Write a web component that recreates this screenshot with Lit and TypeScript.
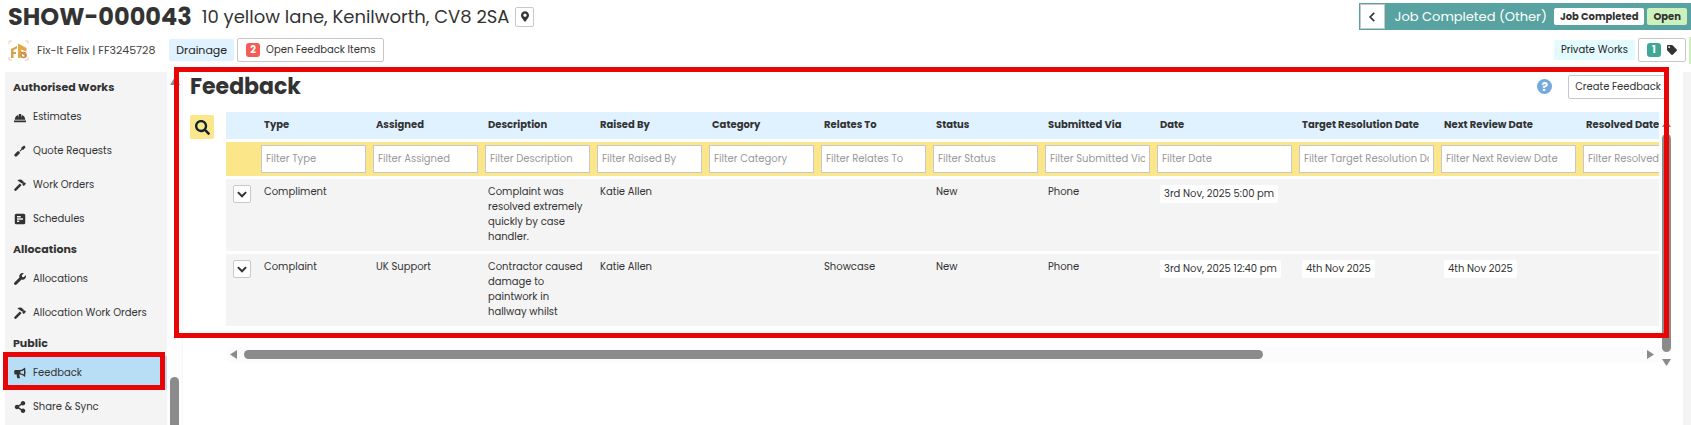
import { LitElement, html, css, svg } from "lit";
import { customElement } from "lit/decorators.js";

interface Column { name: string; wide?: boolean; filter: string }
interface Feedback { [key: string]: string }

const columns: Column[] = [
  { name: "Type", filter: "Filter Type" },
  { name: "Assigned", filter: "Filter Assigned" },
  { name: "Description", filter: "Filter Description" },
  { name: "Raised By", filter: "Filter Raised By" },
  { name: "Category", filter: "Filter Category" },
  { name: "Relates To", filter: "Filter Relates To" },
  { name: "Status", filter: "Filter Status" },
  { name: "Submitted Via", filter: "Filter Submitted Via" },
  { name: "Date", filter: "Filter Date", wide: true },
  { name: "Target Resolution Date", filter: "Filter Target Resolution Date", wide: true },
  { name: "Next Review Date", filter: "Filter Next Review Date", wide: true },
  { name: "Resolved Date", filter: "Filter Resolved Date", wide: true },
];

const rows: Feedback[] = [
  {
    Type: "Compliment",
    Description: "Complaint was resolved extremely quickly by case handler.",
    "Raised By": "Katie Allen",
    Status: "New",
    "Submitted Via": "Phone",
    Date: "3rd Nov, 2025 5:00 pm",
  },
  {
    Type: "Complaint",
    Assigned: "UK Support",
    Description: "Contractor caused damage to paintwork in hallway whilst",
    "Raised By": "Katie Allen",
    "Relates To": "Showcase",
    Status: "New",
    "Submitted Via": "Phone",
    Date: "3rd Nov, 2025 12:40 pm",
    "Target Resolution Date": "4th Nov 2025",
    "Next Review Date": "4th Nov 2025",
  },
];

const icons = {
  search: { box: "0 0 512 512", art: svg`<path d="M505 442.700L405.300 343c-4.500-4.500-10.600-7-17-7H372c27.600-35.300 44-79.700 44-128C416 93.100 322.900 0 208 0S0 93.100 0 208s93.100 208 208 208c48.300 0 92.700-16.400 128-44v16.300c0 6.400 2.500 12.500 7 17l99.700 99.700c9.400 9.400 24.600 9.400 33.900 0l28.300-28.300c9.400-9.400 9.400-24.600.1-34zM208 336c-70.700 0-128-57.200-128-128 0-70.700 57.200-128 128-128 70.700 0 128 57.200 128 128 0 70.700-57.200 128-128 128z"/>` },
  pin: { box: "0 0 384 512", art: svg`<path d="M172.268 501.670C26.970 291.031 0 269.413 0 192 0 85.961 85.961 0 192 0s192 85.961 192 192c0 77.413-26.970 99.031-172.268 309.670-9.535 13.774-29.930 13.773-39.464 0zM192 272c44.183 0 80-35.817 80-80s-35.817-80-80-80-80 35.817-80 80 35.817 80 80 80z"/>` },
  tag: { box: "0 0 512 512", art: svg`<path d="M0 252.118V48C0 21.490 21.490 0 48 0h204.118a48 48 0 0 1 33.941 14.059l211.882 211.882c18.745 18.745 18.745 49.137 0 67.882L293.823 497.941c-18.745 18.745-49.137 18.745-67.882 0L14.059 286.059A48 48 0 0 1 0 252.118zM112 64c-26.510 0-48 21.490-48 48s21.490 48 48 48 48-21.490 48-48-21.490-48-48-48z"/>` },
  wrench: { box: "0 0 512 512", art: svg`<path d="M507.730 109.100c-2.240-9.030-13.540-12.090-20.120-5.510l-74.360 74.360-67.880-11.310-11.310-67.880 74.360-74.360c6.620-6.620 3.430-17.900-5.660-20.160-47.380-11.740-99.550.91-136.580 37.930-39.640 39.640-50.550 97.100-34.050 147.200L18.740 402.760c-24.990 24.990-24.990 65.510 0 90.500 24.990 24.990 65.510 24.990 90.500 0l213.210-213.210c50.120 16.710 107.470 5.680 147.370-34.220 37.070-37.070 49.700-89.320 37.910-136.730z"/>` },
  share: { box: "0 0 448 512", art: svg`<path d="M352 320c-22.608 0-43.387 7.819-59.790 20.895l-102.486-64.054a96.551 96.551 0 0 0 0-41.683l102.486-64.054C308.613 184.181 329.392 192 352 192c53.019 0 96-42.981 96-96S405.019 0 352 0s-96 42.981-96 96c0 7.158.79 14.130 2.276 20.841L155.790 180.895C139.387 167.819 118.608 160 96 160c-53.019 0-96 42.981-96 96s42.981 96 96 96c22.608 0 43.387-7.819 59.790-20.895l102.486 64.054A96.301 96.301 0 0 0 256 416c0 53.019 42.981 96 96 96s96-42.981 96-96-42.981-96-96-96z"/>` },
  hat: { box: "0 0 16 16", art: svg`<path d="M1 11.500a7 7 0 0 1 4.400-6.300L6.400 9V4h3.200v5l1-3.800a7 7 0 0 1 4.400 6.300zM0 12.500h16V15H0z"/>` },
  driver: { box: "0 0 16 16", art: svg`<path d="M15.500 2.500 13.500.5 9.800 3.300v1.900L7.400 7.600l1 1 2.400-2.400h1.900zM6.600 8.300 4.700 8.400.9 12.200a1.800 1.800 0 0 0 0 2.500l.4.4a1.800 1.800 0 0 0 2.500 0l3.800-3.800.1-1.900z"/>` },
  hammer: { box: "0 0 16 16", art: svg`<path d="M4.500 2C6.800.3 9.800.5 11.600 2.200l1.200 1.200v1.200l.8.300.7-.5L16 6.300l-3 3-1.900-1.800.4-.8-.4-.9H9.900L8.600 4.700C7.700 3.700 6.200 2.900 4.500 2zM7.700 5.900l2.400 2.400-6.900 7.100a1.600 1.600 0 0 1-2.400-2.300z"/>` },
  board: { box: "0 0 16 16", art: svg`<path fill-rule="evenodd" d="M3 1h10a2 2 0 0 1 2 2v10a2 2 0 0 1-2 2H3a2 2 0 0 1-2-2V3a2 2 0 0 1 2-2zm1 3v2h5V4zm0 3v2h8V7zm0 3v2h3v-2z"/>` },
  horn: { box: "0 0 16 16", art: svg`<path fill-rule="evenodd" d="M14.300 1c.4 0 .7.300.7.700v4.200a1.300 1.300 0 0 1 0 2.300v4.200c0 .5-.5.800-1 .500l-2-1.500a6.500 6.500 0 0 0-4-1.400H7.100c-.2 1.400.1 2.600.8 3.700.3.500 0 1.300-.7 1.300H5c-.3 0-.6-.2-.7-.5A9 9 0 0 1 3.700 10H2a1.800 1.800 0 0 1-1.700-1.800V5.800C.3 4.800 1 4 2 4h6a6.500 6.500 0 0 0 4-1.400l2-1.500zM13.300 4A9 9 0 0 1 8.500 5.800v2.400A9 9 0 0 1 13.300 10z"/>` },
  down: { box: "0 0 16 16", art: svg`<path d="M2.500 5.500 8 11l5.500-5.500" fill="none" stroke="currentColor" stroke-width="2.600"/>` },
  left: { box: "0 0 16 16", art: svg`<path d="M11 2.500 5.500 8l5.500 5.500" fill="none" stroke="currentColor" stroke-width="2.200"/>` },
};
type IconName = keyof typeof icons;

const icon = (name: IconName) =>
  html`<svg class="icon" viewBox=${icons[name].box} fill="currentColor" aria-hidden="true">${icons[name].art}</svg>`;

const menu: { title: string; items: { label: string; icon: IconName; active?: boolean }[] }[] = [
  {
    title: "Authorised Works",
    items: [
      { label: "Estimates", icon: "hat" },
      { label: "Quote Requests", icon: "driver" },
      { label: "Work Orders", icon: "hammer" },
      { label: "Schedules", icon: "board" },
    ],
  },
  {
    title: "Allocations",
    items: [
      { label: "Allocations", icon: "wrench" },
      { label: "Allocation Work Orders", icon: "hammer" },
    ],
  },
  {
    title: "Public",
    items: [
      { label: "Feedback", icon: "horn", active: true },
      { label: "Share & Sync", icon: "share" },
    ],
  },
];

const base = css`
  * { box-sizing: border-box; }
  h1, h2, h3, p, ul { margin: 0; padding: 0; }
  ul { list-style: none; }
  a { color: inherit; text-decoration: none; }
  button { font: inherit; color: inherit; background: #fff; border: 1px solid #c8c8c8; border-radius: 2px; padding: 0; display: inline-flex; align-items: center; justify-content: center; white-space: nowrap; }
  .icon { display: block; width: 12px; height: 12px; flex: none; }
`;

@customElement("job-header")
class JobHeader extends LitElement {
  static styles = [base, css`
    :host { display: block; }
    .bar { display: flex; justify-content: space-between; align-items: center; }
    .top { height: 33px; padding-left: 8px; }
    .sub { height: 34px; padding-left: 8px; }
    .group { display: flex; align-items: center; white-space: nowrap; }
    .ref { font-size: 24px; line-height: 32px; font-weight: 700; }
    .address { font-size: 18px; line-height: 32px; padding: 0 6px 0 10px; }
    .pin { width: 19px; height: 20px; }
    .pin .icon { width: 8px; height: 11px; }
    .status { gap: 3px; height: 27px; background: #58a3a1; padding: 0 4px 0 1px; color: #fff; }
    .back { width: 25px; height: 25px; color: #333; border-radius: 0; }
    .stage { font-size: 13px; padding: 0 4px 0 7px; }
    .chip { font-size: 10px; line-height: 17px; font-weight: 700; color: #333; background: #fff; border-radius: 2px; padding: 0 6px; }
    .open { background: #cdf1bd; }
    .logo { width: 21px; height: 21px; }
    .client { font-size: 11px; padding: 0 14px 0 8px; color: #444; }
    .trade { background: #e0f2ff; color: #222; font-size: 11px; line-height: 22px; border-radius: 2px; padding: 0 7px; margin-right: 3px; }
    .items { height: 24px; gap: 6px; padding: 0 8px; font-size: 10px; }
    .count { font-size: 10px; line-height: 14px; min-width: 14px; padding: 0 4px; font-weight: 700; color: #fff; background: #f55b57; border-radius: 3px; }
    .teal { background: #3fa796; padding: 0 5px; }
    .works { background: #e3fbff; color: #222; font-size: 10px; line-height: 20px; border-radius: 2px; padding: 0 7px; margin-right: 3px; }
    .items .icon { width: 10px; height: 10px; }
    .edge { width: 2px; height: 27px; margin-left: 3px; background: #cdf1bd; }
  `];
  render() {
    return html`
      <header>
        <div class="bar top">
          <div class="group">
            <h1 class="ref">SHOW-000043</h1>
            <span class="address">10 yellow lane, Kenilworth, CV8 2SA</span>
            <button class="pin" aria-label="Show on map">${icon("pin")}</button>
          </div>
          <div class="group status">
            <button class="back" aria-label="Back">${icon("left")}</button>
            <span class="stage">Job Completed (Other)</span>
            <span class="chip">Job Completed</span>
            <span class="chip open">Open</span>
          </div>
        </div>
        <div class="bar sub">
          <div class="group">
            <svg class="logo" viewBox="0 0 21 21" aria-hidden="true">
              <path d="M1 4V1h3M17 1h3v3M1 17v3h3M17 20h3v-3" fill="none" stroke="#f3b8a8" stroke-width="0.8" />
              <path d="M3 18V9L9 6v2.500L5.500 10v2H8v2H5.500v4z" fill="#d9a04a" />
              <path d="M10 3.500l8.500 4.500v3.500L13 9.500 12.500 18H10z" fill="#e3a93f" />
              <circle cx="15.500" cy="15" r="2.500" fill="none" stroke="#c98d45" stroke-width="1.600" />
              <path d="M12.500 11.500l6 5" stroke="#c98d45" stroke-width="1.400" />
            </svg>
            <span class="client">Fix-It Felix | FF3245728</span>
            <span class="trade">Drainage</span>
            <button class="items"><span class="count">2</span>Open Feedback Items</button>
          </div>
          <div class="group">
            <span class="works">Private Works</span>
            <button class="items" aria-label="1 tag"><span class="count teal">1</span>${icon("tag")}</button>
            <span class="edge"></span>
          </div>
        </div>
      </header>
    `;
  }
}

@customElement("job-menu")
class JobMenu extends LitElement {
  static styles = [base, css`
    :host { display: flex; }
    .nav { width: 162px; background: #f4f4f4; padding-top: 2px; }
    .title { font-size: 11px; line-height: 26px; font-weight: 700; padding: 0 8px; }
    .link { display: flex; align-items: center; gap: 7px; height: 34px; padding-left: 9px; font-size: 10px; white-space: nowrap; }
    .active { position: relative; background: #b8def5; }
    .mark { position: absolute; inset: -4px 2px 0 -2px; border: 5px solid #e80505; pointer-events: none; }
    .scroll { display: flex; flex-direction: column; justify-content: space-between; align-items: center; width: 15px; padding-top: 5px; background: #fdfdfd; }
    .up { width: 10px; height: 8px; fill: #8b8b8b; }
    .thumb { width: 9px; height: 48px; border-radius: 5px 5px 0 0; background: #8b8b8b; }
  `];
  render() {
    return html`
      <nav class="nav" aria-label="Job sections">
        ${menu.map((group) => html`
          <h3 class="title">${group.title}</h3>
          <ul>
            ${group.items.map((item) => html`
              <li>
                <a class="link ${item.active ? "active" : ""}" href="#">
                  ${icon(item.icon)}${item.label}
                  ${item.active ? html`<span class="mark"></span>` : ""}
                </a>
              </li>
            `)}
          </ul>
        `)}
      </nav>
      <div class="scroll" aria-hidden="true">
        <svg class="up" viewBox="0 0 10 8"><path d="M5 0l5 8H0z" /></svg>
        <span class="thumb"></span>
      </div>
    `;
  }
}

@customElement("feedback-panel")
class FeedbackPanel extends LitElement {
  static styles = [base, css`
    :host { display: block; position: relative; min-width: 0; padding: 0 12px 0 7px; border-left: 1px solid #f8f8f8; }
    .mark { position: absolute; inset: -5px 14px auto -9px; height: 271px; border: 5px solid #e80505; pointer-events: none; }
    .head { display: flex; align-items: center; justify-content: space-between; height: 29px; margin-right: 3px; }
    .heading { font-size: 22px; line-height: 28px; font-weight: 700; }
    .actions { display: flex; align-items: center; gap: 16px; }
    .help { width: 15px; height: 15px; border: 0; border-radius: 50%; background: #74a9e0; color: #fff; font-size: 12px; font-weight: 700; }
    .create { height: 24px; padding: 0 6px; font-size: 10px; }
    .body { display: grid; grid-template-columns: 24px minmax(0, 1fr) 12px; padding-top: 11px; }
    .search { width: 24px; height: 24px; margin-top: 3px; border: 0; background: #fbe78a; color: #123; }
    .search .icon { width: 15px; height: 15px; }
    .view { overflow: hidden; margin-left: 12px; }
    .table { table-layout: fixed; width: 1496px; border-spacing: 0 3px; margin-top: -3px; font-size: 10px; line-height: 15px; }
    .toggle-col { width: 32px; }
    .col { width: 112px; }
    .wide { width: 142px; }
    th, td { padding: 0 6px; text-align: left; vertical-align: top; }
    th { height: 27px; vertical-align: middle; font-weight: 700; white-space: nowrap; background: #e0f2ff; padding-bottom: 2px; }
    .filter { height: 34px; padding: 3px 4px 3px 3px; background: #fbe78a; }
    .input { display: block; width: 100%; height: 28px; border: 1px solid #c8c8c8; border-radius: 0; background: #fff; font: inherit; padding: 0 4px; }
    .input::placeholder { color: #999; opacity: 1; }
    .cell { height: 72px; padding-top: 5px; background: #f4f4f4; }
    .cell-toggle { padding-left: 7px; padding-top: 6px; }
    .toggle { width: 18px; height: 18px; }
    .date { display: inline-block; margin-top: 1px; line-height: 18px; padding: 0 4px; background: #fff; border-radius: 2px; white-space: nowrap; }
    .arrow { width: 9px; height: 9px; fill: #8b8b8b; flex: none; }
    .vbar { display: flex; flex-direction: column; align-items: flex-end; padding-top: 7px; gap: 6px; margin-bottom: -38px; background: linear-gradient(#fcfcfc, #fcfcfc) right / 12px 100% no-repeat; }
    .vthumb { flex: 1; width: 9px; border-radius: 5px; background: #8b8b8b; }
    .hbar { grid-column: 2; display: flex; align-items: center; gap: 6px; height: 15px; margin: 18px 0 0 12px; padding: 0 4px 0 3px; background: #fcfcfc; }
    .htrack { flex: 1; }
    .hthumb { width: 73%; height: 9px; border-radius: 5px; background: #8b8b8b; }
  `];
  render() {
    return html`
      <div class="head">
        <h2 class="heading">Feedback</h2>
        <div class="actions">
          <button class="help" aria-label="Help">?</button>
          <button class="create">Create Feedback</button>
        </div>
      </div>
      <div class="body">
        <button class="search" aria-label="Search">${icon("search")}</button>
        <div class="view">
          <table class="table">
            <colgroup>
              <col class="toggle-col" />
              ${columns.map((c) => html`<col class=${c.wide ? "wide" : "col"} />`)}
            </colgroup>
            <thead>
              <tr><th></th>${columns.map((c) => html`<th scope="col">${c.name}</th>`)}</tr>
              <tr>
                <td class="filter"></td>
                ${columns.map((c) => html`<td class="filter"><input class="input" type="text" aria-label=${c.filter} placeholder=${c.filter} /></td>`)}
              </tr>
            </thead>
            <tbody>
              ${rows.map((row) => html`
                <tr>
                  <td class="cell cell-toggle"><button class="toggle" aria-label="Expand row">${icon("down")}</button></td>
                  ${columns.map((c) => html`<td class="cell">${c.wide && row[c.name] ? html`<span class="date">${row[c.name]}</span>` : row[c.name] ?? ""}</td>`)}
                </tr>
              `)}
            </tbody>
          </table>
        </div>
        <div class="vbar" aria-hidden="true">
          <svg class="arrow" viewBox="0 0 9 9"><path d="M4.500 1 9 8H0z" /></svg>
          <span class="vthumb"></span>
          <svg class="arrow" viewBox="0 0 9 9"><path d="M4.500 8 9 1H0z" /></svg>
        </div>
        <div class="hbar" aria-hidden="true">
          <svg class="arrow" viewBox="0 0 9 9"><path d="M1 4.500 8 0v9z" /></svg>
          <div class="htrack"><div class="hthumb"></div></div>
          <svg class="arrow" viewBox="0 0 9 9"><path d="M8 4.500 1 0v9z" /></svg>
        </div>
      </div>
      <div class="mark"></div>
    `;
  }
}

@customElement("app-root")
class AppRoot extends LitElement {
  static styles = css`
    :host { display: flex; flex-direction: column; height: 100vh; overflow: hidden; background: #fff; color: #333; font-family: Poppins, Inter, "Open Sans", sans-serif; }
    .main { flex: 1; min-height: 0; display: grid; grid-template-columns: auto minmax(0, 1fr) 8px; padding-left: 5px; margin-top: 5px; }
    .side { background: #f4f4f4; }
  `;
  render() {
    return html`
      <job-header></job-header>
      <div class="main">
        <job-menu></job-menu>
        <feedback-panel></feedback-panel>
        <div class="side"></div>
      </div>
    `;
  }
}
